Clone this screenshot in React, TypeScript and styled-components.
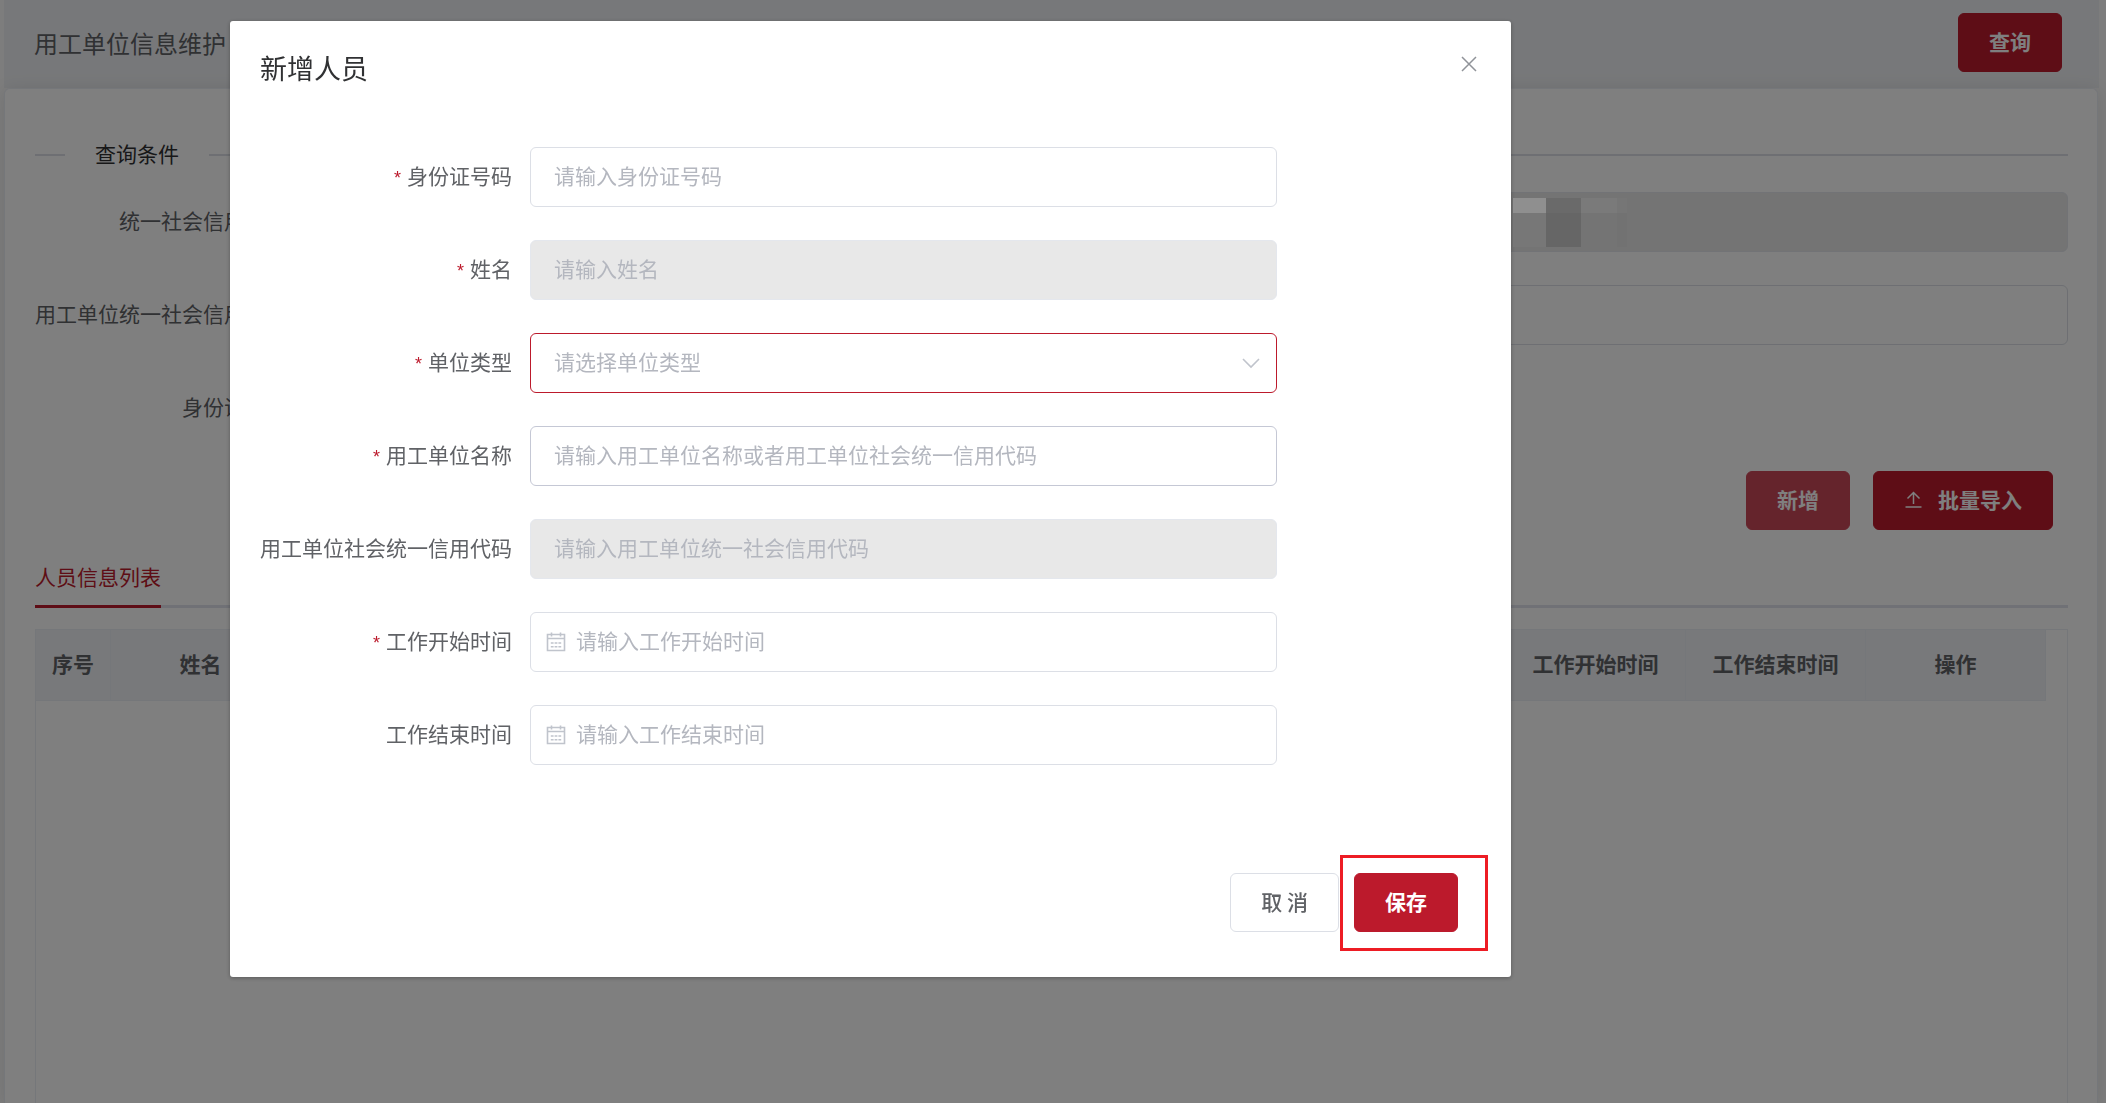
import React from "react";
import styled, { createGlobalStyle, css } from "styled-components";

const RED = "#bc1a2c";

const GlobalStyle = createGlobalStyle`
  *, *::before, *::after { box-sizing: border-box; }
  html, body, #root { height: 100%; }
  body {
    margin: 0;
    overflow: hidden;
    background: #fafafa;
    color: #606266;
    font-family: "Noto Sans CJK SC", "Liberation Sans", sans-serif;
    font-size: 21px;
    line-height: 30px;
  }
  button, input, select { font: inherit; margin: 0; }
`;

const Page = styled.div`
  display: flex;
  flex-direction: column;
  height: 100%;
  padding: 0 7px 0 4px;
`;

const Header = styled.header`
  display: flex;
  flex: none;
  align-items: center;
  justify-content: space-between;
  height: 88px;
  padding: 0 37px 3px 30px;
  background: #eff1f4;
`;

const PageTitle = styled.h1`
  margin: 0;
  font-size: 24px;
  font-weight: 400;
`;

const Card = styled.main`
  display: flex;
  flex: 1;
  flex-direction: column;
  margin-right: 1px;
  padding: 51px 29px 0 30px;
  background: #fff;
  border: 1px solid #ebeef5;
  border-bottom: 0;
  border-radius: 6px 6px 0 0;
  box-shadow: 0 2px 18px rgba(0, 0, 0, 0.1);
`;

const Divider = styled.h2`
  display: flex;
  align-items: center;
  gap: 30px;
  height: 30px;
  margin: 0 0 22px;
  color: #303133;
  font-size: 21px;
  font-weight: 400;

  &::before,
  &::after {
    content: "";
    height: 2px;
    background: #dcdfe6;
  }
  &::before { width: 30px; }
  &::after { flex: 1; }
`;

const DividerText = styled.span`
  padding-bottom: 4px;
`;

const SearchGrid = styled.form`
  display: grid;
  grid-template-columns: 1fr 1fr;
  row-gap: 33px;
`;

const Row = styled.div`
  display: flex;
  align-items: center;
`;

const Label = styled.label<{ $required?: boolean }>`
  flex: none;
  width: 270px;
  padding: 0 18px 4px 0;
  font-weight: 400;
  text-align: right;
  white-space: nowrap;

  ${(p) =>
    p.$required &&
    css`
      &::before {
        content: "*";
        margin-right: 6px;
        color: ${RED};
        font-family: "Liberation Sans", sans-serif;
        font-size: 18px;
        line-height: 18px;
      }
    `}
`;

const Control = styled.div`
  position: relative;
  display: flex;
  flex: 1;
  min-width: 0;
`;

const SearchControl = styled(Control)<{ $second?: boolean }>`
  margin-left: ${(p) => (p.$second ? "270px" : "0")};
`;

const fieldStyle = css<{ $tone?: "hover" | "active"; $icon?: boolean }>`
  width: 100%;
  height: 60px;
  padding: 0 23px 5px ${(p) => (p.$icon ? "45px" : "23px")};
  color: #b4b7bf;
  background: #fff;
  border: 1px solid
    ${(p) => (p.$tone === "active" ? RED : p.$tone === "hover" ? "#c5c8d5" : "#dcdfe6")};
  border-radius: 6px;
  outline: none;

  &::placeholder { color: #b4b7bf; opacity: 1; }
  &:disabled {
    background: #e8e8e8;
    border-color: #e4e7ed;
  }
`;

const Input = styled.input`${fieldStyle}`;
const Select = styled.select`
  ${fieldStyle}
  appearance: none;
`;

const Chevron = styled.svg`
  position: absolute;
  top: 18px;
  right: 14px;
  pointer-events: none;
`;

const CalendarMark = styled.svg`
  position: absolute;
  top: 20px;
  left: 16px;
  pointer-events: none;
`;

const Mosaic = styled.div`
  position: absolute;
  z-index: 30;
  top: 6px;
  right: 441px;
  display: grid;
  grid-template-columns: 33px 35px 36px 10px;
  grid-template-rows: 15px 34px;
`;

const Tile = styled.i<{ $shade: string }>`
  background: ${(p) => p.$shade};
`;

const Button = styled.button<{ $kind?: "soft" | "plain" }>`
  display: inline-flex;
  align-items: center;
  justify-content: center;
  gap: 16px;
  height: 59px;
  padding: 0 30px 3px;
  color: ${(p) => (p.$kind === "plain" ? "#606266" : "#fff")};
  font-weight: ${(p) => (p.$kind === "plain" ? 500 : 700)};
  background: ${(p) => (p.$kind === "plain" ? "#fff" : p.$kind === "soft" ? "#cb4959" : RED)};
  border: 1px solid ${(p) => (p.$kind === "plain" ? "#dcdfe6" : p.$kind === "soft" ? "#cb4959" : RED)};
  border-radius: 6px;
  cursor: pointer;
`;

const Toolbar = styled.div`
  display: flex;
  justify-content: flex-end;
  gap: 23px;
  margin: 33px 15px 0 0;
`;

const Tabs = styled.nav`
  display: flex;
  margin: 30px 0 21px;
  border-bottom: 3px solid #e0e2ec;
`;

const Tab = styled.button`
  margin-bottom: -3px;
  padding: 0 0 13px;
  color: ${RED};
  line-height: 32px;
  background: none;
  border: 0;
  border-bottom: 3px solid ${RED};
  cursor: pointer;
`;

const TableFrame = styled.div`
  flex: 1;
  padding-right: 21px;
  border: 1px solid #ebeef5;
  border-bottom: 0;
`;

const Table = styled.table`
  width: 100%;
  table-layout: fixed;
  border-collapse: separate;
  border-spacing: 0;
`;

const HeadCell = styled.th<{ $width?: number }>`
  width: ${(p) => (p.$width ? `${p.$width}px` : "auto")};
  height: 71px;
  padding: 0 0 4px;
  font-weight: 700;
  text-align: center;
  background: #f1f3f7;
  border-right: 1px solid #ebeef5;
  border-bottom: 1px solid #ebeef5;
`;

const Overlay = styled.div`
  position: fixed;
  inset: 0;
  z-index: 20;
  padding: 21px 595px 0 230px;
  background: rgba(0, 0, 0, 0.5);
`;

const Dialog = styled.section`
  padding: 29px 30px 45px;
  background: #fff;
  border-radius: 3px;
  box-shadow: 0 1px 4px rgba(0, 0, 0, 0.3);
`;

const DialogHead = styled.header`
  display: flex;
  align-items: flex-start;
  justify-content: space-between;
  height: 97px;
`;

const DialogTitle = styled.h2`
  margin: 0;
  color: #303133;
  font-size: 27px;
  font-weight: 400;
  line-height: 36px;
`;

const CloseButton = styled.button`
  display: flex;
  padding: 6px 4px;
  background: none;
  border: 0;
  cursor: pointer;
`;

const DialogForm = styled.form`
  display: grid;
  gap: 33px;
  padding-right: 204px;
`;

const DialogFoot = styled.footer`
  display: flex;
  justify-content: flex-end;
  gap: 15px;
  margin-top: 108px;
  padding-right: 23px;
`;

const Marked = styled.span`
  position: relative;
  display: flex;

  &::after {
    content: "";
    position: absolute;
    inset: -18px -30px -19px -14px;
    border: 3px solid #ed1c24;
    pointer-events: none;
  }
`;

const UploadIcon = () => (
  <svg width="18" height="18" viewBox="0 0 18 18" fill="none" stroke="currentColor" strokeWidth="1.5" aria-hidden="true">
    <path d="M9.5 14V3M3.5 8.5l6-6 6 6M1.5 17h16" />
  </svg>
);

const CalendarIcon = () => (
  <CalendarMark width="20" height="20" viewBox="0 0 20 20" fill="none" stroke="#c0c4cc" strokeWidth="1.6" aria-hidden="true">
    <path d="M1.5 2.5h17v16h-17zM1.5 6.5h17M5.5 0.5v4M14.5 0.5v4" />
    <path d="M4.8 11h2.8M8.6 11h2.8M12.4 11h2.8M4.8 14.8h2.8M8.6 14.8h2.8M12.4 14.8h2.8" />
  </CalendarMark>
);

const SHADES = ["#8f8f8f", "#6a6a6a", "#7a7a7a", "#767676", "#777777", "#666666", "#747474", "#727272"];

type Field = {
  id: string;
  label: string;
  hint: string;
  required?: boolean;
  disabled?: boolean;
  kind?: "select" | "date";
  tone?: "hover" | "active";
};

const FIELDS: Field[] = [
  { id: "idno", label: "身份证号码", hint: "请输入身份证号码", required: true },
  { id: "name", label: "姓名", hint: "请输入姓名", required: true, disabled: true },
  { id: "type", label: "单位类型", hint: "请选择单位类型", required: true, kind: "select", tone: "active" },
  { id: "org", label: "用工单位名称", hint: "请输入用工单位名称或者用工单位社会统一信用代码", required: true, tone: "hover" },
  { id: "code", label: "用工单位社会统一信用代码", hint: "请输入用工单位统一社会信用代码", disabled: true },
  { id: "start", label: "工作开始时间", hint: "请输入工作开始时间", required: true, kind: "date" },
  { id: "end", label: "工作结束时间", hint: "请输入工作结束时间", kind: "date" },
];

function FormField({ field }: { field: Field }) {
  const { id, label, hint, required, disabled, kind, tone } = field;
  return (
    <Row>
      <Label htmlFor={id} $required={required}>{label}</Label>
      <Control>
        {kind === "select" ? (
          <>
            <Select id={id} $tone={tone} defaultValue="">
              <option value="">{hint}</option>
            </Select>
            <Chevron width="24" height="24" viewBox="0 0 24 24" fill="none" stroke="#c0c4cc" strokeWidth="1.6" aria-hidden="true">
              <path d="M4 8l8 8 8-8" />
            </Chevron>
          </>
        ) : (
          <Input id={id} placeholder={hint} disabled={disabled} $tone={tone} $icon={kind === "date"} />
        )}
        {kind === "date" && <CalendarIcon />}
      </Control>
    </Row>
  );
}

export default function App() {
  return (
    <>
      <GlobalStyle />
      <Page>
        <Header>
          <PageTitle>用工单位信息维护</PageTitle>
          <Button type="button">查询</Button>
        </Header>
        <Card>
          <Divider><DividerText>查询条件</DividerText></Divider>
          <SearchGrid>
            <Row>
              <Label htmlFor="q-code">统一社会信用代码</Label>
              <SearchControl><Input id="q-code" disabled /></SearchControl>
            </Row>
            <Row>
              <SearchControl $second>
                <Input aria-label="单位名称" disabled />
                <Mosaic>{SHADES.map((s) => <Tile key={s} $shade={s} />)}</Mosaic>
              </SearchControl>
            </Row>
            <Row>
              <Label htmlFor="q-org">用工单位统一社会信用代码</Label>
              <SearchControl><Input id="q-org" /></SearchControl>
            </Row>
            <Row>
              <SearchControl $second><Input aria-label="用工单位名称" /></SearchControl>
            </Row>
            <Row>
              <Label htmlFor="q-id">身份证号码</Label>
              <SearchControl><Input id="q-id" /></SearchControl>
            </Row>
          </SearchGrid>
          <Toolbar>
            <Button type="button" $kind="soft">新增</Button>
            <Button type="button"><UploadIcon />批量导入</Button>
          </Toolbar>
          <Tabs><Tab type="button">人员信息列表</Tab></Tabs>
          <TableFrame>
            <Table>
              <thead>
                <tr>
                  <HeadCell $width={75}>序号</HeadCell>
                  <HeadCell $width={180}>姓名</HeadCell>
                  <HeadCell />
                  <HeadCell $width={180}>工作开始时间</HeadCell>
                  <HeadCell $width={180}>工作结束时间</HeadCell>
                  <HeadCell $width={180}>操作</HeadCell>
                </tr>
              </thead>
            </Table>
          </TableFrame>
        </Card>
      </Page>
      <Overlay>
        <Dialog role="dialog" aria-labelledby="dialog-title">
          <DialogHead>
            <DialogTitle id="dialog-title">新增人员</DialogTitle>
            <CloseButton type="button" aria-label="关闭">
              <svg width="16" height="16" viewBox="0 0 16 16" stroke="#909399" strokeWidth="1.5" aria-hidden="true">
                <path d="M1 1l14 14M15 1L1 15" />
              </svg>
            </CloseButton>
          </DialogHead>
          <DialogForm>
            {FIELDS.map((f) => <FormField key={f.id} field={f} />)}
          </DialogForm>
          <DialogFoot>
            <Button type="button" $kind="plain">取 消</Button>
            <Marked><Button type="button">保存</Button></Marked>
          </DialogFoot>
        </Dialog>
      </Overlay>
    </>
  );
}
